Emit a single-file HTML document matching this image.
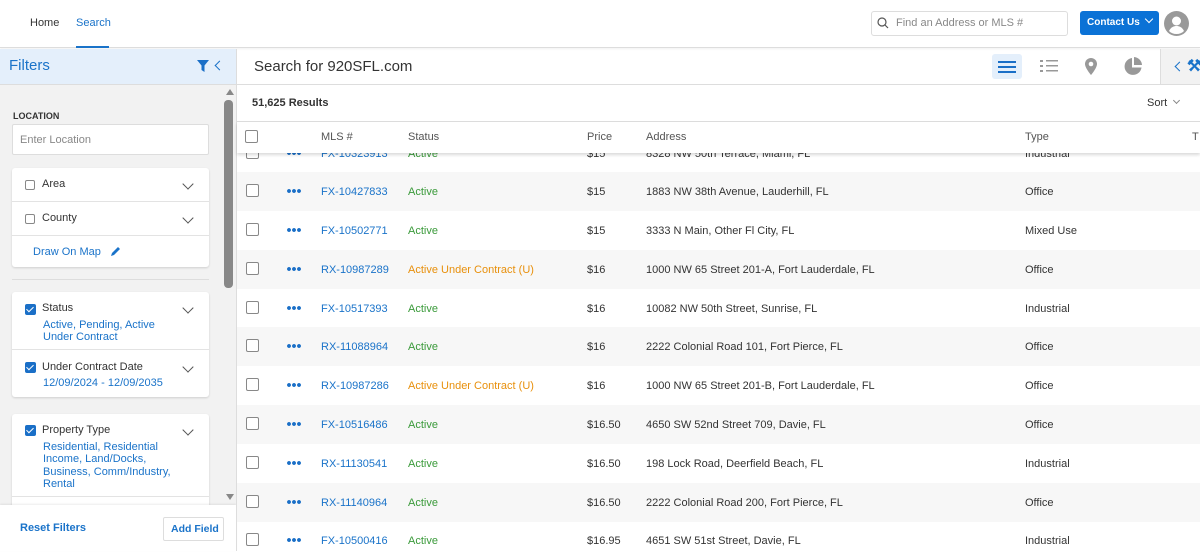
<!DOCTYPE html>
<html><head><style>
*{box-sizing:border-box;margin:0;padding:0}
body{width:1200px;height:551px;overflow:hidden;font-family:"Liberation Sans",sans-serif;font-size:11px;color:#333;background:#fff;position:relative}
.abs{position:absolute}
.blue{color:#1a73c9}
.cb{position:absolute;width:13px;height:13px;border:1px solid #888;border-radius:2px;background:#fff}
.cbc{position:absolute;width:11px;height:11px;border-radius:2px;background:#1a6fc7}
.cbc:after{content:"";position:absolute;left:3px;top:1px;width:3px;height:6px;border:solid #fff;border-width:0 1.5px 1.5px 0;transform:rotate(45deg)}
.chev{position:absolute;width:8px;height:8px;border:solid #555;border-width:0 1.3px 1.3px 0;transform:rotate(45deg)}
.card{position:absolute;left:12px;width:197px;background:#fff;border-radius:3px;box-shadow:0 1px 2px rgba(0,0,0,.15)}
.row{position:absolute;left:237px;width:963px;height:39px}
.row span{position:absolute;top:14px}
.row .cb{left:9px;top:12px}
.row .d{position:absolute;left:50px;top:17px;width:14px;height:4px;background:radial-gradient(circle at 2px 2px,#1a6fc7 1.8px,transparent 2px) 0 0/5px 4px repeat-x}
</style></head><body>
<div class="abs" style="left:0;top:0;width:1200px;height:48px;border-bottom:1px solid #ddd;box-shadow:0 1px 2px rgba(0,0,0,.06)"></div>
<div class="abs" style="left:30px;top:17px;font-size:11px;color:#333">Home</div>
<div class="abs blue" style="left:76px;top:17px">Search</div>
<div class="abs" style="left:76px;top:46px;width:33px;height:2px;background:#1a73c9"></div>
<div class="abs" style="left:871px;top:11px;width:197px;height:25px;border:1px solid #ddd;border-radius:3px"></div>
<svg class="abs" style="left:877px;top:17px" width="12" height="12" viewBox="0 0 12 12"><circle cx="5" cy="5" r="4" fill="none" stroke="#555" stroke-width="1.2"/><line x1="8" y1="8" x2="11" y2="11" stroke="#555" stroke-width="1.2"/></svg>
<div class="abs" style="left:896px;top:17px;color:#888">Find an Address or MLS #</div>
<div class="abs" style="left:1080px;top:11px;width:79px;height:24px;background:#0b72d6;border-radius:3px;color:#fff;font-weight:bold;font-size:10px;padding:6px 0 0 7px">Contact Us</div>
<div class="chev" style="left:1146px;top:16px;border-color:#fff;width:6px;height:6px"></div>
<svg class="abs" style="left:1164px;top:11px" width="25" height="25" viewBox="0 0 25 25"><circle cx="12.5" cy="12.5" r="12.5" fill="#999"/><circle cx="12.5" cy="10" r="4.5" fill="#fff"/><path d="M5 20c2-4 5-5 7.5-5s5.5 1 7.5 5c-2 2-4.5 3-7.5 3S7 22 5 20z" fill="#fff"/></svg>
<div class="abs" style="left:0;top:49px;width:236px;height:36px;background:#e4effb;border-bottom:1px solid #ddd"></div>
<div class="abs blue" style="left:9px;top:57px;font-size:15px">Filters</div>
<svg class="abs" style="left:197px;top:60px" width="12" height="12" viewBox="0 0 12 12"><path d="M0 0h12L7.5 5.5V12L4.5 10V5.5z" fill="#1a6fc7"/></svg>
<div class="chev" style="left:216px;top:62px;transform:rotate(135deg);border-color:#1a73c9;width:7px;height:7px"></div>
<div class="abs" style="left:0;top:85px;width:236px;height:420px;background:#f2f2f2"></div>
<div class="abs" style="left:226px;top:89px;width:0;height:0;border:4px solid transparent;border-bottom:6px solid #888;border-top:0"></div>
<div class="abs" style="left:224px;top:100px;width:9px;height:188px;background:#888;border-radius:4px"></div>
<div class="abs" style="left:226px;top:494px;width:0;height:0;border:4px solid transparent;border-top:6px solid #888;border-bottom:0"></div>
<div class="abs" style="left:13px;top:111px;font-size:9px;font-weight:bold;color:#333">LOCATION</div>
<div class="abs" style="left:12px;top:124px;width:197px;height:31px;background:#fff;border:1px solid #ddd;border-radius:2px;color:#888;padding:9px 0 0 7px">Enter Location</div>
<div class="card" style="top:168px;height:99px"></div>
<div class="cb" style="left:25px;top:180px;width:10px;height:10px"></div>
<div class="abs" style="left:42px;top:178px">Area</div><div class="chev" style="left:184px;top:180px"></div>
<div class="abs" style="left:12px;top:201px;width:197px;height:1px;background:#e3e3e3"></div>
<div class="cb" style="left:25px;top:214px;width:10px;height:10px"></div>
<div class="abs" style="left:42px;top:212px">County</div><div class="chev" style="left:184px;top:214px"></div>
<div class="abs" style="left:12px;top:235px;width:197px;height:1px;background:#e3e3e3"></div>
<div class="abs blue" style="left:33px;top:246px">Draw On Map</div>
<svg class="abs" style="left:110px;top:246px" width="11" height="11" viewBox="0 0 11 11"><path d="M1 10l1-3 6-6 2 2-6 6z" fill="#1a73c9"/></svg>
<div class="abs" style="left:12px;top:279px;width:197px;height:1px;background:#ddd"></div>
<div class="card" style="top:292px;height:105px"></div>
<div class="cbc" style="left:25px;top:304px"></div>
<div class="abs" style="left:42px;top:302px">Status</div><div class="chev" style="left:184px;top:304px"></div>
<div class="abs blue" style="left:43px;top:319px;line-height:12px">Active, Pending, Active<br>Under Contract</div>
<div class="abs" style="left:12px;top:349px;width:197px;height:1px;background:#e3e3e3"></div>
<div class="cbc" style="left:25px;top:362px"></div>
<div class="abs" style="left:42px;top:361px">Under Contract Date</div><div class="chev" style="left:184px;top:363px"></div>
<div class="abs blue" style="left:43px;top:377px">12/09/2024 - 12/09/2035</div>
<div class="card" style="top:414px;height:100px"></div>
<div class="cbc" style="left:25px;top:425px"></div>
<div class="abs" style="left:42px;top:424px">Property Type</div><div class="chev" style="left:184px;top:426px"></div>
<div class="abs blue" style="left:43px;top:441px;line-height:12.3px">Residential, Residential<br>Income, Land/Docks,<br>Business, Comm/Industry,<br>Rental</div>
<div class="abs" style="left:12px;top:496px;width:197px;height:1px;background:#e3e3e3"></div>
<div class="abs" style="left:0;top:505px;width:236px;height:46px;background:#fff;box-shadow:0 -1px 2px rgba(0,0,0,.08)"></div>
<div class="abs blue" style="left:20px;top:522px;font-weight:bold">Reset Filters</div>
<div class="abs blue" style="left:163px;top:517px;width:61px;height:24px;border:1px solid #ddd;border-radius:2px;font-weight:bold;font-size:10.5px;padding:5px 0 0 7px">Add Field</div>
<div class="abs" style="left:236px;top:49px;width:1px;height:502px;background:#ddd"></div>
<div class="abs" style="left:237px;top:84px;width:963px;height:1px;background:#ddd"></div>
<div class="abs" style="left:254px;top:58px;font-size:15px;color:#333">Search for 920SFL.com</div>
<div class="abs" style="left:992px;top:54px;width:30px;height:25px;background:#e4effb;border-radius:3px"></div>
<svg class="abs" style="left:997px;top:59px" width="20" height="16"><rect x="1" y="2" width="18" height="2" fill="#1a6fc7"/><rect x="1" y="7" width="18" height="2" fill="#1a6fc7"/><rect x="1" y="12" width="18" height="2" fill="#1a6fc7"/></svg>
<svg class="abs" style="left:1039px;top:58px" width="20" height="16"><g fill="#999"><rect x="1" y="2" width="3" height="2"/><rect x="7" y="2" width="12" height="1.5"/><rect x="1" y="7" width="3" height="2"/><rect x="7" y="7" width="12" height="1.5"/><rect x="1" y="12" width="3" height="2"/><rect x="7" y="12" width="12" height="1.5"/></g></svg>
<svg class="abs" style="left:1084px;top:58px" width="14" height="17"><path d="M7 0a6 6 0 0 0-6 6c0 4 6 11 6 11s6-7 6-11a6 6 0 0 0-6-6z" fill="#999"/><circle cx="7" cy="6" r="2.3" fill="#fff"/></svg>
<svg class="abs" style="left:1124px;top:57px" width="19" height="19" viewBox="0 0 19 19"><path d="M8 1a8.5 8.5 0 1 0 9.5 9.5H8z" fill="#999"/><path d="M10 0v8h8a8.5 8.5 0 0 0-8-8z" fill="#999"/></svg>
<div class="abs" style="left:1160px;top:49px;width:40px;height:35px;background:#f2f2f2;border-left:1px solid #ddd"></div>
<div class="chev" style="left:1176px;top:63px;transform:rotate(135deg);border-color:#1a73c9;width:7px;height:7px"></div>
<div class="abs blue" style="left:1187px;top:56px;font-size:16px;font-weight:bold">⚒</div>
<div class="abs" style="left:252px;top:97px;font-weight:bold;font-size:11px">51,625 Results</div>
<div class="abs" style="left:1147px;top:97px">Sort</div><div class="chev" style="left:1174px;top:98px;width:5px;height:5px;border-color:#888"></div>
<div class="abs" style="left:237px;top:121px;width:963px;height:1px;background:#ddd"></div>
<div class="row" style="top:134px;background:#fff"><div class="cb"></div><div class="d"></div><span style="left:84px;color:#1a73c9">FX-10323913</span><span style="left:171px;color:#3a9a3a">Active</span><span style="left:350px">$15</span><span style="left:409px">8328 NW 50th Terrace, Miami, FL</span><span style="left:788px">Industrial</span></div>
<div class="row" style="top:172px;background:#f7f7f7"><div class="cb"></div><div class="d"></div><span style="left:84px;color:#1a73c9">FX-10427833</span><span style="left:171px;color:#3a9a3a">Active</span><span style="left:350px">$15</span><span style="left:409px">1883 NW 38th Avenue, Lauderhill, FL</span><span style="left:788px">Office</span></div>
<div class="row" style="top:211px"><div class="cb"></div><div class="d"></div><span style="left:84px;color:#1a73c9">FX-10502771</span><span style="left:171px;color:#3a9a3a">Active</span><span style="left:350px">$15</span><span style="left:409px">3333 N Main, Other Fl City, FL</span><span style="left:788px">Mixed Use</span></div>
<div class="row" style="top:250px;background:#f7f7f7"><div class="cb"></div><div class="d"></div><span style="left:84px;color:#1a73c9">RX-10987289</span><span style="left:171px;color:#e8900c">Active Under Contract (U)</span><span style="left:350px">$16</span><span style="left:409px">1000 NW 65 Street 201-A, Fort Lauderdale, FL</span><span style="left:788px">Office</span></div>
<div class="row" style="top:289px"><div class="cb"></div><div class="d"></div><span style="left:84px;color:#1a73c9">FX-10517393</span><span style="left:171px;color:#3a9a3a">Active</span><span style="left:350px">$16</span><span style="left:409px">10082 NW 50th Street, Sunrise, FL</span><span style="left:788px">Industrial</span></div>
<div class="row" style="top:327px;background:#f7f7f7"><div class="cb"></div><div class="d"></div><span style="left:84px;color:#1a73c9">RX-11088964</span><span style="left:171px;color:#3a9a3a">Active</span><span style="left:350px">$16</span><span style="left:409px">2222 Colonial Road 101, Fort Pierce, FL</span><span style="left:788px">Office</span></div>
<div class="row" style="top:366px"><div class="cb"></div><div class="d"></div><span style="left:84px;color:#1a73c9">RX-10987286</span><span style="left:171px;color:#e8900c">Active Under Contract (U)</span><span style="left:350px">$16</span><span style="left:409px">1000 NW 65 Street 201-B, Fort Lauderdale, FL</span><span style="left:788px">Office</span></div>
<div class="row" style="top:405px;background:#f7f7f7"><div class="cb"></div><div class="d"></div><span style="left:84px;color:#1a73c9">FX-10516486</span><span style="left:171px;color:#3a9a3a">Active</span><span style="left:350px">$16.50</span><span style="left:409px">4650 SW 52nd Street 709, Davie, FL</span><span style="left:788px">Office</span></div>
<div class="row" style="top:444px"><div class="cb"></div><div class="d"></div><span style="left:84px;color:#1a73c9">RX-11130541</span><span style="left:171px;color:#3a9a3a">Active</span><span style="left:350px">$16.50</span><span style="left:409px">198 Lock Road, Deerfield Beach, FL</span><span style="left:788px">Industrial</span></div>
<div class="row" style="top:483px;background:#f7f7f7"><div class="cb"></div><div class="d"></div><span style="left:84px;color:#1a73c9">RX-11140964</span><span style="left:171px;color:#3a9a3a">Active</span><span style="left:350px">$16.50</span><span style="left:409px">2222 Colonial Road 200, Fort Pierce, FL</span><span style="left:788px">Office</span></div>
<div class="row" style="top:521px"><div class="cb"></div><div class="d"></div><span style="left:84px;color:#1a73c9">FX-10500416</span><span style="left:171px;color:#3a9a3a">Active</span><span style="left:350px">$16.95</span><span style="left:409px">4651 SW 51st Street, Davie, FL</span><span style="left:788px">Industrial</span></div>
<div class="abs" style="left:237px;top:122px;width:963px;height:31px;background:#fff;box-shadow:0 2px 3px rgba(0,0,0,.15)"></div>
<div class="cb" style="left:245px;top:130px"></div>
<div class="abs" style="left:321px;top:131px;color:#555">MLS #</div>
<div class="abs" style="left:408px;top:131px;color:#555">Status</div>
<div class="abs" style="left:587px;top:131px;color:#555">Price</div>
<div class="abs" style="left:646px;top:131px;color:#555">Address</div>
<div class="abs" style="left:1025px;top:131px;color:#555">Type</div>
<div class="abs" style="left:1192px;top:131px;color:#555">T</div>
</body></html>
